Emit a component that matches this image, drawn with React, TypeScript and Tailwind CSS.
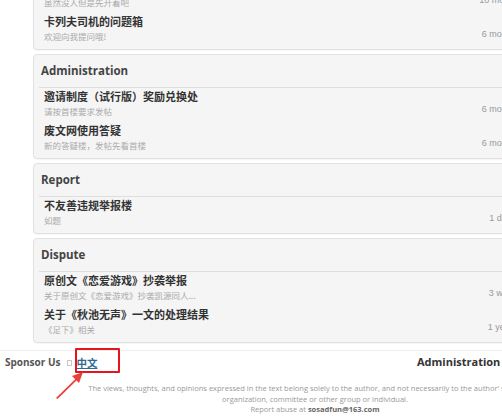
import React from 'react';

type Row = { title: string; sub: string; time: string };
type Section = { name: string; rows: Row[] };

const SECTIONS: Section[] = [
  {
    name: 'Feedback',
    rows: [
      { title: '废文网意见箱', sub: '虽然没人但是先开着吧', time: '10 months ago' },
      { title: '卡列夫司机的问题箱', sub: '欢迎向我提问哦!', time: '6 months ago' },
    ],
  },
  {
    name: 'Administration',
    rows: [
      { title: '邀请制度（试行版）奖励兑换处', sub: '请按首楼要求发帖', time: '6 months ago' },
      { title: '废文网使用答疑', sub: '新的答疑楼，发帖先看首楼', time: '6 months ago' },
    ],
  },
  {
    name: 'Report',
    rows: [{ title: '不友善违规举报楼', sub: '如题', time: '1 day ago' }],
  },
  {
    name: 'Dispute',
    rows: [
      { title: '原创文《恋爱游戏》抄袭举报', sub: '关于原创文《恋爱游戏》抄袭凯源同人...', time: '3 wks ago' },
      { title: '关于《秋池无声》一文的处理结果', sub: '《足下》相关', time: '1 year ago' },
    ],
  },
];

const CJK = { fontFamily: "'Noto Sans CJK SC', 'Liberation Sans', sans-serif" };
const LATIN = { fontFamily: "'Open Sans', 'Liberation Sans', sans-serif" };

function Card({ section }: { section: Section }) {
  return (
    <div className="rounded-[4px] border border-[#e2e2e2] bg-[#f5f5f5] px-[5px] pb-[2px] shadow-[0_1px_1px_rgba(0,0,0,0.04)]">
      <div
        className="flex h-[33px] items-center border-b border-[#dedede] px-[2px] text-[11.5px] font-bold text-[#444]"
        style={LATIN}
      >
        {section.name}
      </div>
      {section.rows.map((r) => (
        <div key={r.title} className="flex items-end px-[5px] pb-[4px] pt-[1px]">
          <div className="flex-1" style={CJK}>
            <div className="text-[11px] font-bold leading-[15px] text-[#333]">{r.title}</div>
            <div className="text-[8.5px] leading-[14px] text-[#aaa]">{r.sub}</div>
          </div>
          <div
            className="mb-[2px] w-[80px] text-center text-[9px] leading-[14px] text-[#999]"
            style={{ fontFamily: "'Liberation Sans', sans-serif" }}
          >
            {r.time}
          </div>
          <div className="w-[37px]" />
        </div>
      ))}
    </div>
  );
}

export default function App() {
  return (
    <div className="h-[416px] w-full overflow-hidden bg-white">
      <div className="w-[630px]">
        <div className="-mt-[55px] flex flex-col gap-[4px] px-[33px]">
          {SECTIONS.map((s) => (
            <Card key={s.name} section={s} />
          ))}
        </div>

        {/* footer */}
        <div className="relative mt-[7px] border-t border-[#eeeeee]">
          <div className="flex h-[23px] items-center">
            <div className="flex w-[417px] items-center pl-[5px]">
              <span className="text-[10px] font-bold text-[#555]" style={LATIN}>
                Sponsor Us
              </span>
              <span className="ml-[7px] inline-block h-[6px] w-[5px] border border-[#c8c8c8]" />
              <a
                className="ml-[4px] text-[10.5px] font-bold text-[#2e6a94] underline"
                style={CJK}
              >
                中文
              </a>
            </div>
            <span className="text-[11px] font-bold text-[#333]" style={LATIN}>
              Administration Rules
            </span>
          </div>
          <div
            className="mt-[9px] text-center text-[7.5px] leading-[10.5px] text-[#999]"
            style={LATIN}
          >
            The views, thoughts, and opinions expressed in the text belong solely to the author, and not necessarily to the author' s employer,
            <br />
            organization, committee or other group or individual.
            <br />
            Report abuse at <span className="font-bold text-[#666]">sosadfun@163.com</span>
          </div>

          {/* annotation */}
          <div className="absolute left-[75px] top-[-3px] h-[25px] w-[45px] rounded-[1px] border-2 border-[#e8141c]" />
          <svg className="absolute left-0 top-0" width="120" height="60" viewBox="0 0 120 60">
            <polygon points="56,47 57.5,48 79,27 77.5,26" fill="#e8403a" />
            <polygon points="83,21 72,25 79,32" fill="#e8403a" />
          </svg>
        </div>
      </div>
    </div>
  );
}
